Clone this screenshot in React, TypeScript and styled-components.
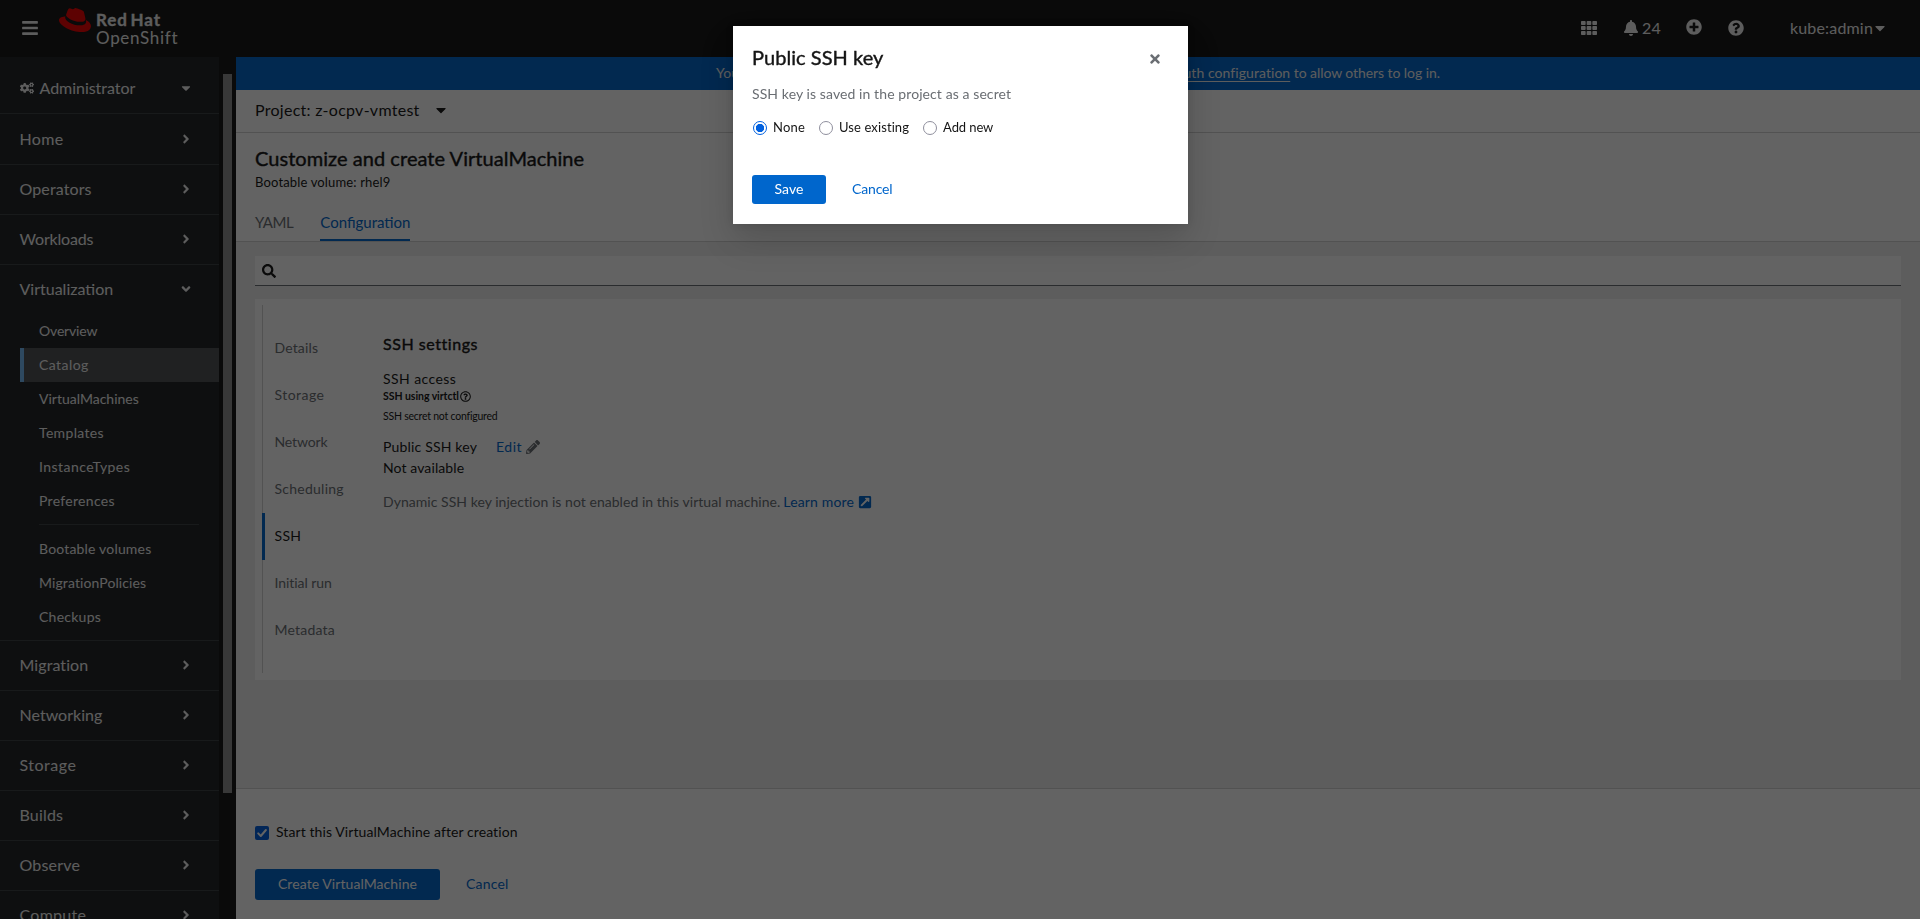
import React from "react";
import styled, { createGlobalStyle, css } from "styled-components";
import {
  FaAngleDown,
  FaAngleRight,
  FaBars,
  FaBell,
  FaCaretDown,
  FaCogs,
  FaExternalLinkSquareAlt,
  FaPencilAlt,
  FaPlusCircle,
  FaQuestionCircle,
  FaRedhat,
  FaRegQuestionCircle,
  FaSearch,
  FaTh,
  FaTimes,
} from "react-icons/fa";

const GlobalStyle = createGlobalStyle`
  *, *::before, *::after { box-sizing: border-box; }
  body {
    margin: 0;
    overflow: hidden;
    font-family: Lato, "Open Sans", sans-serif;
    font-size: 14px;
    color: #151515;
  }
  button { font-family: inherit; }
  svg { display: block; flex: none; }
`;

const Label = styled.span<{ $track?: number }>`
  letter-spacing: ${(p) => p.$track ?? 0}px;
  white-space: pre;
`;

const Page = styled.div`
  display: flex;
  flex-direction: column;
  width: 1920px;
  height: 919px;
  overflow: hidden;
  background: #f0f0f0;
`;

/* ---------- masthead ---------- */

const Masthead = styled.header`
  display: flex;
  align-items: center;
  flex: none;
  height: 57px;
  padding: 0 32px 0 21px;
  background: #151515;
  color: #f0f0f0;
`;

const MenuToggle = styled.button`
  display: flex;
  margin: 0 20px 2px 0;
  padding: 0;
  border: 0;
  background: none;
  color: #f0f0f0;
`;

const Brand = styled.div`
  display: flex;
  gap: 5px;
  height: 57px;
`;

const HatIcon = styled(FaRedhat)`
  margin-top: 4px;
  color: #e00;
`;

const BrandText = styled.div`
  display: flex;
  flex-direction: column;
  padding-top: 11px;
  font-size: 17px;
  line-height: 18px;
`;

const BrandName = styled(Label)`
  font-weight: 700;
  word-spacing: -2px;
  -webkit-text-stroke: 0.3px currentColor;
`;

const Tools = styled.div`
  display: flex;
  align-items: center;
  margin-left: auto;
  padding-bottom: 1px;
  font-size: 16px;
`;

const Tool = styled.div<{ $gap: number; $lift?: number }>`
  display: flex;
  align-items: center;
  gap: 3px;
  margin-left: ${(p) => p.$gap}px;
  padding-bottom: ${(p) => p.$lift ?? 0}px;

  > span { padding-bottom: 1px; }
`;

const UserCaret = styled(FaCaretDown)`
  margin-left: -4px;
`;

/* ---------- sidebar ---------- */

const Body = styled.div`
  display: flex;
  flex: 1;
  min-height: 0;
`;

const Sidebar = styled.nav`
  width: 219px;
  flex: none;
  overflow: hidden;
  background: #212427;
  color: #f0f0f0;
`;

const NavRow = styled.div<{ $open?: boolean }>`
  display: flex;
  align-items: center;
  justify-content: space-between;
  height: ${(p) => (p.$open ? 49 : 50)}px;
  padding: 0 26px 2px 19.5px;
  font-size: 16px;
  ${(p) => !p.$open && css`border-bottom: 1px solid #3c3f42;`}

  > span { padding-bottom: 1px; }
`;

const Perspective = styled(NavRow)`
  height: 57px;
  padding-top: 6px;
  padding-bottom: 0;
  margin-bottom: 1px;
`;

const PerspectiveName = styled.span`
  display: flex;
  align-items: center;
  gap: 6px;
`;

const SubNav = styled.ul`
  margin: 0;
  padding: 0 0 6px 20px;
  list-style: none;
  border-bottom: 1px solid #3c3f42;
`;

const SubItem = styled.li<{ $active?: boolean }>`
  display: flex;
  align-items: center;
  height: 34px;
  padding: 0 0 1px 15px;
  border-left: 4px solid ${(p) => (p.$active ? "#73bcf7" : "transparent")};
  background: ${(p) => (p.$active ? "#4f5255" : "none")};
`;

const SubDivider = styled.li`
  height: 1px;
  margin: 6px 20px 7px 19px;
  background: #3c3f42;
`;

const ScrollTrack = styled.div`
  width: 17px;
  flex: none;
  padding: 17px 4px 0;
  background: #151515;
`;

const ScrollThumb = styled.div`
  height: 719px;
  background: #8f8f8f;
`;

/* ---------- main ---------- */

const Main = styled.main`
  display: flex;
  flex-direction: column;
  flex: 1;
  min-width: 0;
`;

const Banner = styled.div`
  display: flex;
  justify-content: center;
  align-items: center;
  height: 33px;
  padding-bottom: 2px;
  background: #06c;
  color: #f0f0f0;
`;

const BannerLink = styled.a`
  text-decoration: underline;
  text-underline-offset: 3px;
`;

const ProjectBar = styled.div`
  display: flex;
  align-items: center;
  gap: 13px;
  height: 43px;
  padding: 0 19px 2px;
  border-bottom: 1px solid #d2d2d2;
  background: #fff;
  font-size: 16px;

  > span { padding-bottom: 1px; }
`;

const PageHeader = styled.section`
  padding: 12px 19px 0;
  background: #fff;
  border-bottom: 1px solid #d2d2d2;
`;

const Title = styled.h1`
  margin: 0;
  font-size: 20px;
  font-weight: 400;
  line-height: 27px;
  -webkit-text-stroke: 0.4px currentColor;
`;

const Subtitle = styled.div`
  font-size: 13px;
  line-height: 20px;
`;

const Tabs = styled.div`
  display: flex;
  gap: 27px;
  padding-top: 11px;
`;

const Tab = styled.div<{ $active?: boolean }>`
  display: flex;
  align-items: center;
  height: 38px;
  font-size: 15px;
  color: ${(p) => (p.$active ? "#06c" : "#6a6e73")};
  box-shadow: ${(p) => (p.$active ? "inset 0 -2px #06c" : "none")};
`;

const Content = styled.section`
  flex: 1;
  padding: 14px 19px 0;
`;

const SearchBox = styled.div`
  display: flex;
  align-items: center;
  height: 30px;
  padding-left: 7px;
  border-bottom: 1px solid #6a6e73;
  background: #fff;
`;

const Card = styled.div`
  display: flex;
  height: 381px;
  margin-top: 13px;
  padding: 6px 7px 7px;
  background: #fff;
`;

const SideTabs = styled.ul`
  width: 121px;
  margin: 0;
  padding: 20px 0 0;
  list-style: none;
  box-shadow: inset 1px 0 #d2d2d2;
`;

const SideTab = styled.li<{ $active?: boolean }>`
  display: flex;
  align-items: center;
  height: 47px;
  padding: 0 0 2px 9.5px;
  border-left: 3px solid ${(p) => (p.$active ? "#06c" : "transparent")};
  color: ${(p) => (p.$active ? "#151515" : "#6a6e73")};
`;

const Settings = styled.div`
  display: flex;
  flex-direction: column;
  padding-top: 27px;
  line-height: 21px;
`;

const SettingsTitle = styled.h2`
  margin: 0 0 13px;
  font-size: 16px;
  font-weight: 400;
  line-height: 24px;
  -webkit-text-stroke: 0.4px currentColor;
`;

const SmallLine = styled.div<{ $bold?: boolean }>`
  display: flex;
  align-items: center;
  gap: 1px;
  font-size: 10.5px;
  line-height: 16px;
  font-weight: ${(p) => (p.$bold ? 700 : 400)};
  margin-bottom: ${(p) => (p.$bold ? 4 : 12)}px;
`;

const AccessLabel = styled.div`
  line-height: 20px;
  margin-bottom: -1px;
`;

const KeyRow = styled.div`
  display: flex;
  align-items: center;
  gap: 19px;
`;

const LinkButton = styled.button`
  display: inline-flex;
  align-items: center;
  gap: 4px;
  padding: 0;
  border: 0;
  background: none;
  color: #06c;
  font-size: 14px;
  line-height: 21px;
`;

const EditIcon = styled(FaPencilAlt)`
  color: #6a6e73;
`;

const HelpText = styled.div`
  display: flex;
  align-items: center;
  gap: 3px;
  margin-top: 13px;
  color: #6a6e73;
`;

/* ---------- footer ---------- */

const Footer = styled.footer`
  height: 131px;
  padding: 33px 19px 0;
  border-top: 1px solid #d2d2d2;
  background: #fff;
`;

const CheckRow = styled.label`
  display: flex;
  align-items: center;
  gap: 7px;
  height: 21px;
  line-height: 19px;
  margin-bottom: 26px;

  > span:last-child { padding-bottom: 2px; }
`;

const CheckBox = styled.span`
  display: flex;
  align-items: center;
  justify-content: center;
  width: 14px;
  height: 14px;
  border-radius: 2px;
  background: #0060df;
`;

const Actions = styled.div`
  display: flex;
  align-items: center;
  gap: 26px;

  > button { padding-bottom: 2px; }
`;

const PrimaryButton = styled.button<{ $w: number; $h: number }>`
  width: ${(p) => p.$w}px;
  height: ${(p) => p.$h}px;
  padding: 0;
  border: 0;
  border-radius: 3px;
  background: #06c;
  color: #fff;
  font-size: 14px;
`;

/* ---------- modal ---------- */

const Backdrop = styled.div`
  position: fixed;
  inset: 0;
  display: flex;
  justify-content: center;
  align-items: flex-start;
  padding-top: 26px;
  background: rgba(3, 3, 3, 0.62);
`;

const Dialog = styled.div`
  width: 455px;
  height: 198px;
  margin-left: 1px;
  padding: 18px 19px 0;
  background: #fff;
  box-shadow: 0 16px 32px rgba(3, 3, 3, 0.16), 0 0 8px rgba(3, 3, 3, 0.1);
`;

const DialogHeader = styled.div`
  display: flex;
  align-items: center;
  justify-content: space-between;
  height: 26px;
  padding-right: 7px;
  color: #6a6e73;
`;

const CloseIcon = styled(FaTimes)`
  margin-top: 4px;
`;

const DialogTitle = styled(Title)`
  line-height: 26px;
  color: #151515;
`;

const DialogText = styled.p`
  margin: 13px 0 14px;
  line-height: 21px;
  color: #6a6e73;
`;

const RadioRow = styled.div`
  display: flex;
  align-items: center;
  gap: 14px;
  height: 20px;
  margin-left: 1px;
  font-size: 13px;
`;

const RadioOption = styled.label`
  display: flex;
  align-items: center;
  gap: 6px;

  > span:last-child { padding-bottom: 2px; }
`;

const RadioDot = styled.span<{ $checked?: boolean }>`
  width: 14px;
  height: 14px;
  border-radius: 50%;
  border: ${(p) => (p.$checked ? "1.5px solid #0060df" : "1px solid #8f8f9d")};
  background: ${(p) =>
    p.$checked ? "radial-gradient(circle, #0060df 3.8px, #fff 4.5px)" : "#fff"};
`;

const DialogActions = styled(Actions)`
  margin-top: 37px;
`;

type Item = [text: string, track: number];

const topItems: Item[] = [["Home", 0.37], ["Operators", 0.11], ["Workloads", -0.18]];
const bottomItems: Item[] = [
  ["Migration", 0.08],
  ["Networking", 0.01],
  ["Storage", 0.51],
  ["Builds", 0.17],
  ["Observe", 0.19],
  ["Compute", 0.28],
];
const virtualizationItems: Item[] = [
  ["Overview", -0.16],
  ["Catalog", 0.43],
  ["VirtualMachines", 0],
  ["Templates", 0.33],
  ["InstanceTypes", 0.45],
  ["Preferences", 0.3],
];
const virtualizationTools: Item[] = [
  ["Bootable volumes", 0.18],
  ["MigrationPolicies", 0.1],
  ["Checkups", 0.25],
];
const sections: Item[] = [
  ["Details", 0.15],
  ["Storage", 0.45],
  ["Network", -0.13],
  ["Scheduling", 0.25],
  ["SSH", 0.3],
  ["Initial run", -0.05],
  ["Metadata", 0.2],
];
const radios: Item[] = [["None", 0.2], ["Use existing", 0.1], ["Add new", -0.1]];

const CollapsedRow = ({ item: [text, track] }: { item: Item }) => (
  <NavRow>
    <Label $track={track}>{text}</Label>
    <FaAngleRight size={14} />
  </NavRow>
);

const SubLink = ({ item: [text, track], active }: { item: Item; active?: boolean }) => (
  <SubItem $active={active}>
    <Label $track={track}>{text}</Label>
  </SubItem>
);

export default function App() {
  return (
    <>
      <GlobalStyle />
      <Page>
        <Masthead>
          <MenuToggle>
            <FaBars size={18} />
          </MenuToggle>
          <Brand>
            <HatIcon size={32} />
            <BrandText>
              <BrandName $track={0.85}>Red Hat</BrandName>
              <Label $track={0.7}>OpenShift</Label>
            </BrandText>
          </Brand>
          <Tools>
            <Tool $gap={0}><FaTh size={16} /></Tool>
            <Tool $gap={26}>
              <FaBell size={16} />
              <Label $track={0.2}>24</Label>
            </Tool>
            <Tool $gap={25} $lift={2}><FaPlusCircle size={16} /></Tool>
            <Tool $gap={26}><FaQuestionCircle size={16} /></Tool>
            <Tool $gap={46}>
              <Label $track={0.18}>kube:admin</Label>
              <UserCaret size={16} />
            </Tool>
          </Tools>
        </Masthead>
        <Body>
          <Sidebar>
            <Perspective>
              <PerspectiveName>
                <FaCogs size={14} />
                <Label $track={-0.03}>Administrator</Label>
              </PerspectiveName>
              <FaCaretDown size={14} />
            </Perspective>
            {topItems.map((item) => <CollapsedRow key={item[0]} item={item} />)}
            <NavRow $open>
              <Label>Virtualization</Label>
              <FaAngleDown size={14} />
            </NavRow>
            <SubNav>
              {virtualizationItems.map((item) => (
                <SubLink key={item[0]} item={item} active={item[0] === "Catalog"} />
              ))}
              <SubDivider />
              {virtualizationTools.map((item) => <SubLink key={item[0]} item={item} />)}
            </SubNav>
            {bottomItems.map((item) => <CollapsedRow key={item[0]} item={item} />)}
          </Sidebar>
          <ScrollTrack><ScrollThumb /></ScrollTrack>
          <Main>
            <Banner>
              <Label $track={0.06}>
                You are logged in as a temporary administrative user. Update the{" "}
                <BannerLink>cluster OAuth configuration</BannerLink>
              </Label>
              <Label $track={-0.07}> to allow others to log in.</Label>
            </Banner>
            <ProjectBar>
              <Label $track={0.27}>Project: z-ocpv-vmtest</Label>
              <FaCaretDown size={16} />
            </ProjectBar>
            <PageHeader>
              <Title><Label $track={0.05}>Customize and create VirtualMachine</Label></Title>
              <Subtitle><Label $track={0.15}>Bootable volume: rhel9</Label></Subtitle>
              <Tabs>
                <Tab><Label $track={-0.45}>YAML</Label></Tab>
                <Tab $active><Label>Configuration</Label></Tab>
              </Tabs>
            </PageHeader>
            <Content>
              <SearchBox><FaSearch size={14} /></SearchBox>
              <Card>
                <SideTabs>
                  {sections.map(([text, track]) => (
                    <SideTab key={text} $active={text === "SSH"}>
                      <Label $track={track}>{text}</Label>
                    </SideTab>
                  ))}
                </SideTabs>
                <Settings>
                  <SettingsTitle><Label $track={0.55}>SSH settings</Label></SettingsTitle>
                  <AccessLabel><Label $track={0.42}>SSH access</Label></AccessLabel>
                  <SmallLine $bold>
                    <Label $track={-0.05}>SSH using virtctl</Label>
                    <FaRegQuestionCircle size={11} />
                  </SmallLine>
                  <SmallLine><Label $track={-0.23}>SSH secret not configured</Label></SmallLine>
                  <KeyRow>
                    <Label $track={0.18}>Public SSH key</Label>
                    <LinkButton>
                      <Label $track={0.5}>Edit</Label>
                      <EditIcon size={14} />
                    </LinkButton>
                  </KeyRow>
                  <Label $track={0.1}>Not available</Label>
                  <HelpText>
                    <Label $track={0.04}>Dynamic SSH key injection is not enabled in this virtual machine.</Label>
                    <LinkButton>
                      <Label $track={0.15}>Learn more</Label>
                      <FaExternalLinkSquareAlt size={14} />
                    </LinkButton>
                  </HelpText>
                </Settings>
              </Card>
            </Content>
            <Footer>
              <CheckRow>
                <CheckBox>
                  <svg width="14" height="14" viewBox="0 0 14 14">
                    <path d="M3.2 7.4 L5.8 10 L10.9 4" fill="none" stroke="#fff" strokeWidth="2" strokeLinecap="round" strokeLinejoin="round" />
                  </svg>
                </CheckBox>
                <Label $track={0.09}>Start this VirtualMachine after creation</Label>
              </CheckRow>
              <Actions>
                <PrimaryButton $w={185} $h={31}>
                  <Label $track={0.07}>Create VirtualMachine</Label>
                </PrimaryButton>
                <LinkButton><Label $track={0.2}>Cancel</Label></LinkButton>
              </Actions>
            </Footer>
          </Main>
        </Body>
      </Page>
      <Backdrop>
        <Dialog>
          <DialogHeader>
            <DialogTitle><Label $track={0.05}>Public SSH key</Label></DialogTitle>
            <CloseIcon size={14} />
          </DialogHeader>
          <DialogText>
            <Label $track={0.09}>SSH key is saved in the project as a secret</Label>
          </DialogText>
          <RadioRow>
            {radios.map(([text, track]) => (
              <RadioOption key={text}>
                <RadioDot $checked={text === "None"} />
                <Label $track={track}>{text}</Label>
              </RadioOption>
            ))}
          </RadioRow>
          <DialogActions>
            <PrimaryButton $w={74} $h={29}><Label $track={0.1}>Save</Label></PrimaryButton>
            <LinkButton><Label $track={-0.15}>Cancel</Label></LinkButton>
          </DialogActions>
        </Dialog>
      </Backdrop>
    </>
  );
}
